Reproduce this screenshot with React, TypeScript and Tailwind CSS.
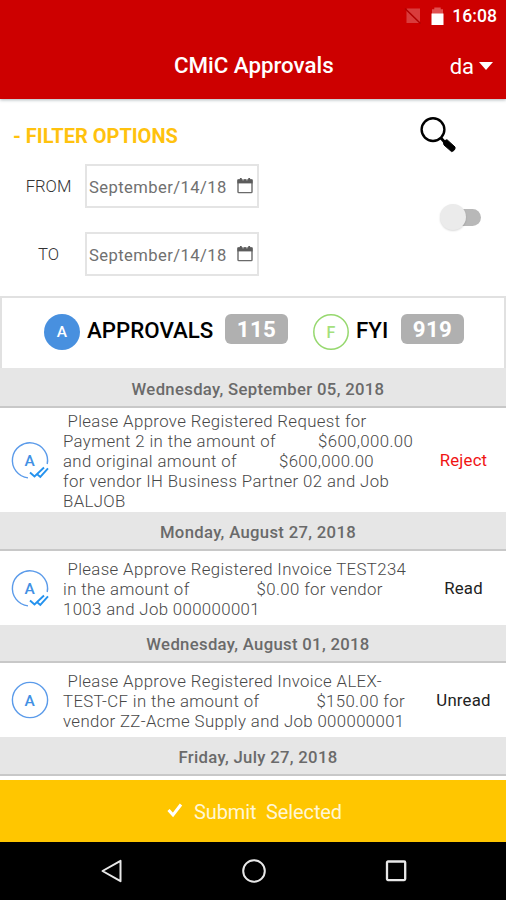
import React from "react";

function SearchIcon() {
  return (
    <svg className="h-9 w-9" viewBox="0 0 36 36" fill="none">
      <circle cx="13" cy="12.6" r="11.4" stroke="#000" strokeWidth="2.4" />
      <path d="M20.5 20.5L25 25.5" stroke="#000" strokeWidth="2.8" />
      <path d="M23.2 24.3L27 22.7L35 30Q35.6 33.5 31.5 34.6L24 28z" fill="#000" stroke="#000" strokeWidth="1" strokeLinejoin="round" />
    </svg>
  );
}

function CalendarIcon() {
  return (
    <svg className="h-[18px] w-[18px] shrink-0" viewBox="0 0 18 18" fill="none">
      <rect x="2" y="3" width="14" height="12.6" rx="0.8" stroke="#6a6a6a" strokeWidth="1.4" />
      <path d="M1.4 2.4h15.2v4H1.4z" fill="#5c5c5c" />
      <path d="M4.8 1v3M13.2 1v3" stroke="#5c5c5c" strokeWidth="1.8" />
      <path d="M6.4 2.8h1.4M10.2 2.8h1.4" stroke="#fff" strokeWidth="0.8" />
    </svg>
  );
}

function DateField({ label }: { label: string }) {
  return (
    <div className="flex h-11 items-center">
      <span className="w-[69px] pt-[2px] text-center text-[16.7px] font-light text-[#333]">{label}</span>
      <div className="ml-[2px] flex h-11 w-[174px] items-center justify-between border-2 border-[#e4e4e4] pr-[3px] pl-[3px]">
        <span className="-ml-px pt-[4px] text-[16.6px] tracking-[0.42px] whitespace-nowrap text-[#707070]">September/14/18</span>
        <CalendarIcon />
      </div>
    </div>
  );
}

function StatusIcon({ checked }: { checked: boolean }) {
  return (
    <svg className="h-10 w-10 shrink-0" viewBox="0 0 40 40" fill="none">
      {checked ? (
        <path d="M37.2 24A17.6 17.6 0 1 0 18 37.9" stroke="#5b9bea" strokeWidth="1.4" />
      ) : (
        <circle cx="20" cy="20" r="17.6" stroke="#5b9bea" strokeWidth="1.4" />
      )}
      <text x="19.7" y="25.5" textAnchor="middle" fill="#4290e4" fontSize="15.5" fontWeight="500" fontFamily="Roboto, sans-serif">A</text>
      {checked && (
        <path d="M20 32.5l4.5 4 9.5-9M27.5 34.5l2.8 2.4L38 28.3" stroke="#2492ee" strokeWidth="1.9" />
      )}
    </svg>
  );
}

function DateHeader({ children, height }: { children: string; height: string }) {
  return (
    <div className={`flex shrink-0 items-end justify-center border-b-2 border-[#c8c8c8] bg-[#e6e6e6] pb-[6px] pl-[10px] text-[16.7px] leading-[20px] font-medium tracking-[0.32px] text-[#6a6a6a] ${height}`}>
      {children}
    </div>
  );
}

interface RowProps {
  lines: React.ReactNode[];
  status: string;
  color: string;
  checked: boolean;
  height: string;
}

function Row({ lines, status, color, checked, height }: RowProps) {
  return (
    <div className={`flex shrink-0 items-center bg-white pl-[10px] ${height}`}>
      <StatusIcon checked={checked} />
      <div className="ml-[13px] w-[358px] pt-[1px] text-[16.8px] leading-[20px] font-light tracking-[0.37px] text-[#484848]">
        {lines.map((line, i) => (
          <div key={i} className="whitespace-pre">{line}</div>
        ))}
      </div>
      <span className={`w-[85px] pt-[2px] text-center text-[16.8px] tracking-[0.2px] ${color}`}>{status}</span>
    </div>
  );
}

function Gap({ width }: { width: string }) {
  return <span className={`inline-block ${width}`} />;
}

export default function App() {
  return (
    <div className="flex h-[900px] w-[506px] flex-col overflow-hidden bg-white font-[Roboto,sans-serif]">
      <header className="z-10 h-[99px] shrink-0 bg-[#cd0000] text-white shadow-[0_1px_3px_rgba(90,110,120,0.5)]">
        <div className="flex h-8 items-center justify-end pr-[9px]">
          <svg className="h-[18px] w-[18px]" viewBox="0 0 18 18">
            <path d="M3 1.5h13v14.5H2.5V2z" fill="#d93c3c" />
            <path d="M1 1.5l15.5 15" stroke="#b00000" strokeWidth="1.5" />
          </svg>
          <svg className="ml-[9px] h-[19px] w-[13px]" viewBox="0 0 13 19">
            <path d="M3.3 2.3V.5h6.4v1.8H12V8H1V2.3z" fill="#e05050" />
            <path d="M.5 6.5h12V18H.5z" fill="#fff" />
          </svg>
          <span className="ml-[8px] text-[17.6px] font-medium">16:08</span>
        </div>
        <div className="grid h-[67px] grid-cols-[1fr_160px_1fr] items-center">
          <h1 className="col-start-2 ml-px text-center text-[22.3px] font-medium whitespace-nowrap">CMiC Approvals</h1>
          <div className="flex items-center justify-end pr-[13px]">
            <span className="pt-[2px] text-[22px]">da</span>
            <svg className="ml-[5px] h-[8px] w-[14px]" viewBox="0 0 14 8"><path d="M0 0h14L7 8z" fill="#fff" /></svg>
          </div>
        </div>
      </header>

      <section className="flex h-[197px] shrink-0 justify-between">
        <div className="pt-[23px] pl-[14px]">
          <h2 className="-ml-px h-[28px] text-[20px] leading-[28px] font-bold text-[#ffc20e]">- FILTER OPTIONS</h2>
          <div className="mt-[14px] flex flex-col gap-6">
            <DateField label="FROM" />
            <DateField label="TO" />
          </div>
        </div>
        <div className="flex w-[86px] flex-col pt-[18px]">
          <SearchIcon />
          <div className="mt-[51px] ml-[20px] flex items-center">
            <div className="z-10 h-[26px] w-[26px] rounded-full bg-[#ebebeb] shadow-[0_1px_2px_rgba(0,0,0,0.15)]" />
            <div className="-ml-[13px] h-[17px] w-[28px] rounded-r-full bg-[#b8b8b8]" />
          </div>
        </div>
      </section>

      <section className="flex h-[72px] shrink-0 items-start border-2 border-b-0 border-[#e1e1e1] pt-[16px] pl-[42px] text-[22.3px] font-medium text-black">
        <div className="flex h-9 w-9 items-center justify-center rounded-full bg-[#4890df] pt-[2px] text-[15.5px] text-white">A</div>
        <span className="ml-[7px] w-[126px] leading-[32px] whitespace-nowrap">APPROVALS</span>
        <span className="ml-[12px] flex h-[30px] w-[63px] items-center justify-center rounded-md bg-[#b0b0b0] pt-[2px] text-[22.3px] font-bold tracking-[0.3px] text-white">115</span>
        <svg className="ml-[25px] h-9 w-9" viewBox="0 0 36 36" fill="none">
          <circle cx="18" cy="18" r="17.2" stroke="#96d86e" strokeWidth="1.5" />
          <text x="18" y="24" textAnchor="middle" fill="#a5e07c" fontSize="16" fontWeight="500" fontFamily="Roboto, sans-serif">F</text>
        </svg>
        <span className="ml-[7px] w-[33px] leading-[32px]">FYI</span>
        <span className="ml-[12px] flex h-[30px] w-[63px] items-center justify-center rounded-md bg-[#b0b0b0] pt-[2px] text-[22.3px] font-bold tracking-[0.3px] text-white">919</span>
      </section>

      <DateHeader height="h-[40px]">Wednesday, September 05, 2018</DateHeader>
      <Row
        height="h-[104px]"
        checked
        status="Reject"
        color="text-[#f01414]"
        lines={[
          " Please Approve Registered Request for",
          <>Payment 2 in the amount of<Gap width="w-[42px]" />$600,000.00</>,
          <>and original amount of<Gap width="w-[42px]" />$600,000.00</>,
          "for vendor IH Business Partner 02 and Job",
          "BALJOB",
        ]}
      />
      <DateHeader height="h-[39px]">Monday, August 27, 2018</DateHeader>
      <Row
        height="h-[74px]"
        checked
        status="Read"
        color="text-[#222]"
        lines={[
          " Please Approve Registered Invoice TEST234",
          <>in the amount of<Gap width="w-[67px]" />$0.00 for vendor</>,
          "1003 and Job 000000001",
        ]}
      />
      <DateHeader height="h-[38px]">Wednesday, August 01, 2018</DateHeader>
      <Row
        height="h-[74px]"
        checked={false}
        status="Unread"
        color="text-[#222]"
        lines={[
          " Please Approve Registered Invoice ALEX-",
          <>TEST-CF in the amount of<Gap width="w-[57px]" />$150.00 for</>,
          "vendor ZZ-Acme Supply and Job 000000001",
        ]}
      />
      <DateHeader height="h-[39px]">Friday, July 27, 2018</DateHeader>

      <button className="mt-[4px] flex h-[62px] shrink-0 items-center justify-center bg-[#ffc600] pl-[3px] text-[20px] text-[#fff6d6]">
        <svg className="mr-[11px] h-[16px] w-[16px]" viewBox="0 0 16 16" fill="none">
          <path d="M1.5 7l4.5 5L14 1.5" stroke="#fff" strokeWidth="3" />
        </svg>
        <span className="pt-[2px] tracking-[-0.12px] whitespace-pre">Submit  Selected</span>
      </button>

      <nav className="flex h-[58px] shrink-0 items-center bg-black pl-[100px]">
        <svg className="h-6 w-6" viewBox="0 0 24 24" fill="none"><path d="M20.5 1.8v20.4L2.5 12z" stroke="#e8e8e8" strokeWidth="2" strokeLinejoin="round" /></svg>
        <svg className="ml-[118px] h-6 w-6" viewBox="0 0 24 24" fill="none"><circle cx="12" cy="12" r="10.8" stroke="#e8e8e8" strokeWidth="2" /></svg>
        <svg className="ml-[118px] h-6 w-6" viewBox="0 0 24 24" fill="none"><rect x="3" y="2.5" width="18.2" height="18.6" rx="1" stroke="#e8e8e8" strokeWidth="2.3" /></svg>
      </nav>
    </div>
  );
}
